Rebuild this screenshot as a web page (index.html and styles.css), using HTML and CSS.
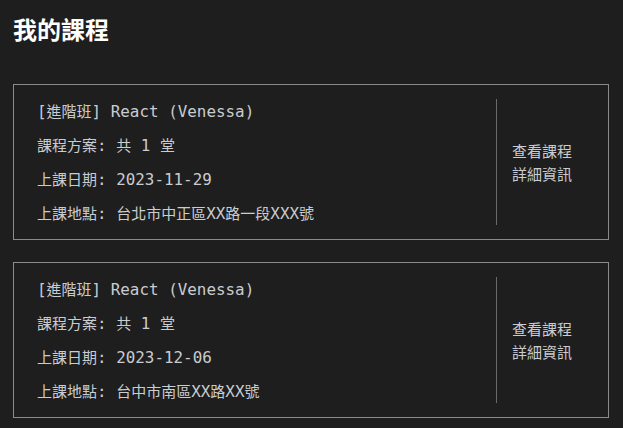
FILE: index.html
```html
<!DOCTYPE html>
<html lang="zh-Hant">
<head>
<meta charset="utf-8">
<title>我的課程</title>
<link rel="stylesheet" href="styles.css">
</head>
<body>
<main class="page">
  <h1 class="title">我的課程</h1>
  <ul class="course-list">
    <li class="course-card">
      <div class="course-info">
        <p class="course-line"><span class="mono">[</span>進階班<span class="mono">] React (Venessa)</span></p>
        <p class="course-line">課程方案<span class="mono">: </span>共<span class="mono"> 1 </span>堂</p>
        <p class="course-line">上課日期<span class="mono">: 2023-11-29</span></p>
        <p class="course-line">上課地點<span class="mono">: </span>台北市中正區<span class="mono">XX</span>路一段<span class="mono">XXX</span>號</p>
      </div>
      <div class="course-action">
        <a class="detail-link" href="#">查看課程詳細資訊</a>
      </div>
    </li>
    <li class="course-card">
      <div class="course-info">
        <p class="course-line"><span class="mono">[</span>進階班<span class="mono">] React (Venessa)</span></p>
        <p class="course-line">課程方案<span class="mono">: </span>共<span class="mono"> 1 </span>堂</p>
        <p class="course-line">上課日期<span class="mono">: 2023-12-06</span></p>
        <p class="course-line">上課地點<span class="mono">: </span>台中市南區<span class="mono">XX</span>路<span class="mono">XX</span>號</p>
      </div>
      <div class="course-action">
        <a class="detail-link" href="#">查看課程詳細資訊</a>
      </div>
    </li>
  </ul>
</main>
</body>
</html>
```

FILE: styles.css
```css
html, body {
  margin: 0;
  padding: 0;
  background: #1e1e1e;
}

.page {
  padding: 11px 14px 0 13px;
  font-family: "Noto Sans CJK TC", sans-serif;
  color: #c9ccd0;
}

.title {
  margin: 0 0 37px;
  font-size: 24px;
  line-height: 36px;
  font-weight: 700;
  color: #ffffff;
}

.course-list {
  list-style: none;
  margin: 0;
  padding: 0;
  display: flex;
  flex-direction: column;
  gap: 22px;
}

.course-card {
  display: flex;
  border: 1px solid #8a8a8a;
  padding: 14px 0 14px 23px;
}

.course-info {
  flex: 1;
  display: flex;
  flex-direction: column;
  gap: 10px;
}

.course-line {
  margin: 0;
  height: 24px;
  font-size: 15px;
  line-height: 24px;
  white-space: pre;
}

.mono {
  font-family: "DejaVu Sans Mono", monospace;
  font-size: 15.9px;
  line-height: 16px;
  color: #c9ccd0;
}

.course-action {
  width: 112px;
  border-left: 1px solid #6a6a6a;
  padding-left: 15px;
  box-sizing: border-box;
  display: flex;
  align-items: center;
}

.detail-link {
  display: block;
  width: 4em;
  font-size: 15px;
  line-height: 23px;
  color: #c9ccd0;
  text-decoration: none;
}
```
